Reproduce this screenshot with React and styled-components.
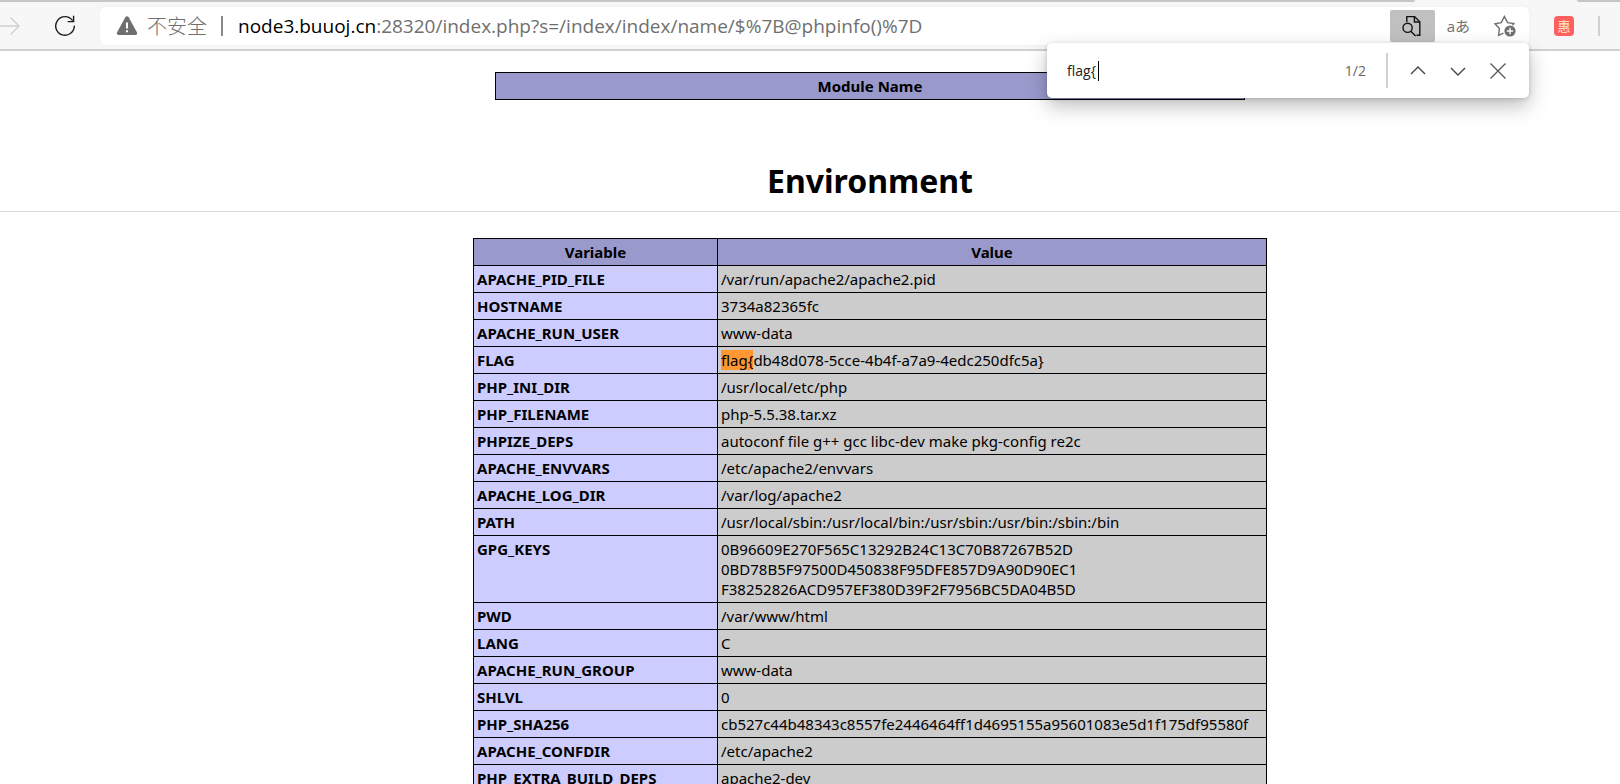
import React, { useState } from "react";
import styled, { createGlobalStyle } from "styled-components";

const colors = {
  chrome: "#f7f7f7",
  chromeEdge: "#f0f0f0",
  strip: "#c6c6c6",
  line: "#d0d0d0",
  muted: "#6f6f6f",
  tableHead: "#9999cc",
  tableName: "#ccccff",
  tableValue: "#cccccc",
  match: "#ff9632",
};

const fonts = {
  chrome: '"Open Sans", "Noto Sans CJK SC", sans-serif',
  page: '"Noto Sans", "Noto Sans CJK SC", sans-serif',
};

const environment = [
  { name: "APACHE_PID_FILE", value: "/var/run/apache2/apache2.pid" },
  { name: "HOSTNAME", value: "3734a82365fc" },
  { name: "APACHE_RUN_USER", value: "www-data" },
  { name: "FLAG", value: "flag{db48d078-5cce-4b4f-a7a9-4edc250dfc5a}" },
  { name: "PHP_INI_DIR", value: "/usr/local/etc/php" },
  { name: "PHP_FILENAME", value: "php-5.5.38.tar.xz" },
  { name: "PHPIZE_DEPS", value: "autoconf file g++ gcc libc-dev make pkg-config re2c" },
  { name: "APACHE_ENVVARS", value: "/etc/apache2/envvars" },
  { name: "APACHE_LOG_DIR", value: "/var/log/apache2" },
  { name: "PATH", value: "/usr/local/sbin:/usr/local/bin:/usr/sbin:/usr/bin:/sbin:/bin" },
  {
    name: "GPG_KEYS",
    value:
      "0B96609E270F565C13292B24C13C70B87267B52D\n0BD78B5F97500D450838F95DFE857D9A90D90EC1\nF38252826ACD957EF380D39F2F7956BC5DA04B5D",
  },
  { name: "PWD", value: "/var/www/html" },
  { name: "LANG", value: "C" },
  { name: "APACHE_RUN_GROUP", value: "www-data" },
  { name: "SHLVL", value: "0" },
  { name: "PHP_SHA256", value: "cb527c44b48343c8557fe2446464ff1d4695155a95601083e5d1f175df95580f" },
  { name: "APACHE_CONFDIR", value: "/etc/apache2" },
  { name: "PHP_EXTRA_BUILD_DEPS", value: "apache2-dev" },
];

/* Value
 *
 * Cell text, with the searched term marked where it occurs.
 */

const Value = ({ text, query }) => {
  const start = query ? text.indexOf(query) : -1;
  if (start < 0) return text;
  return (
    <>
      {text.slice(0, start)}
      <StyledMark>{query}</StyledMark>
      {text.slice(start + query.length)}
    </>
  );
};

/* Toolbar
 *
 * Navigation buttons, address bar and extensions.
 */

const Toolbar = () => (
  <StyledToolbar>
    <StyledNav>
      <StyledIconButton $width={20} aria-label="Forward" disabled>
        <svg width="20" height="20" viewBox="0 0 20 20" fill="none" stroke="#cfcfcf" strokeWidth="1.3">
          <path d="M0 10H19M10.5 1.5L19 10L10.5 18.5" />
        </svg>
      </StyledIconButton>
      <StyledIconButton $width={22} aria-label="Refresh">
        <svg width="22" height="22" viewBox="0 0 22 22" fill="none" stroke="#1b1b1b" strokeWidth="1.4">
          <path d="M18.6 5.6A9.3 9.3 0 1 0 20.3 10.6" />
          <path d="M19.6 0.8V6.6H13.6" />
        </svg>
      </StyledIconButton>
    </StyledNav>
    <StyledAddressBar>
      <StyledSecurity>
        <svg width="22" height="20" viewBox="0 0 22 20">
          <path d="M9.3 1.2Q11 -0.8 12.7 1.2L21 16.6Q21.6 19 19.4 19H2.6Q0.4 19 1 16.6Z" fill={colors.muted} />
          <path d="M11 6.5V12.5M11 14.2V16.2" stroke="#fff" strokeWidth="2" />
        </svg>
        不安全
      </StyledSecurity>
      <StyledDivider $height={20} $color="#8a8a8a" />
      <StyledUrl>
        <b>node3.buuoj.cn</b>:28320/index.php?s=/index/index/name/$%7B@phpinfo()%7D
      </StyledUrl>
      <StyledActions>
        <StyledIconButton $width={45} $active aria-label="Find on page">
          <svg width="22" height="22" viewBox="0 0 22 22" fill="none" stroke="#111" strokeWidth="1.4">
            <path d="M5.8 7V1.6H13.6L18.8 6.8V20.2H15.5" />
            <path d="M13.4 1.6V7H18.8" />
            <circle cx="6.6" cy="12.8" r="4.6" />
            <path d="M9.8 16.2L14.6 21" />
          </svg>
        </StyledIconButton>
        <StyledTranslate aria-label="Translate">aあ</StyledTranslate>
        <StyledIconButton $width={22} aria-label="Add to favorites">
          <svg width="22" height="22" viewBox="0 0 22 22" fill="none" stroke={colors.muted} strokeWidth="1.4">
            <path d="M9.5 18.2L4.6 20.4L5.4 13.6L1 8.8L7.2 7.6L10.4 1.6L13.6 7.6L19.8 8.6L18.4 10.2" />
            <circle cx="16" cy="16" r="5.6" fill={colors.muted} stroke="none" />
            <path d="M16 12.8V19.2M12.8 16H19.2" stroke="#fff" />
          </svg>
        </StyledIconButton>
      </StyledActions>
    </StyledAddressBar>
    <StyledExtensions>
      <StyledExtension>惠</StyledExtension>
      <StyledDivider $height={20} $color={colors.line} />
    </StyledExtensions>
  </StyledToolbar>
);

/* FindBar
 *
 * Search box that floats over the page.
 */

const FindBar = ({ query, onChange }) => (
  <StyledFindBar>
    <StyledField>
      <StyledInput
        aria-label="Find on page"
        value={query}
        onChange={(event) => onChange(event.target.value)}
      />
      <StyledCaret />
    </StyledField>
    <StyledCount>1/2</StyledCount>
    <StyledDivider $height={35} $color={colors.line} />
    <StyledFindButtons>
      <StyledIconButton $width={16} aria-label="Previous result">
        <svg width="16" height="16" viewBox="0 0 16 16" fill="none" stroke="#444" strokeWidth="1.4">
          <path d="M1 11L8 4L15 11" />
        </svg>
      </StyledIconButton>
      <StyledIconButton $width={16} aria-label="Next result">
        <svg width="16" height="16" viewBox="0 0 16 16" fill="none" stroke="#444" strokeWidth="1.4">
          <path d="M1 5L8 12L15 5" />
        </svg>
      </StyledIconButton>
      <StyledIconButton $width={16} aria-label="Close">
        <svg width="16" height="16" viewBox="0 0 16 16" fill="none" stroke="#555" strokeWidth="1.3">
          <path d="M0.5 0.5L15.5 15.5M15.5 0.5L0.5 15.5" />
        </svg>
      </StyledIconButton>
    </StyledFindButtons>
  </StyledFindBar>
);

const App = () => {
  const [query, setQuery] = useState("flag{");

  return (
    <StyledWindow>
      <GlobalStyle />
      <StyledHeader>
        <StyledTabStrip>
          <StyledTabEdge $grow $side="right" />
          <StyledTabEdge $side="left" />
        </StyledTabStrip>
        <Toolbar />
        <FindBar query={query} onChange={setQuery} />
      </StyledHeader>
      <StyledPage>
        <StyledTable $width={750}>
          <thead>
            <tr>
              <StyledHeadCell>Module Name</StyledHeadCell>
            </tr>
          </thead>
        </StyledTable>
        <StyledHeading>Environment</StyledHeading>
        <StyledTable $width={794}>
          <thead>
            <tr>
              <StyledHeadCell $width={244}>Variable</StyledHeadCell>
              <StyledHeadCell>Value</StyledHeadCell>
            </tr>
          </thead>
          <tbody>
            {environment.map(({ name, value }) => (
              <tr key={name}>
                <StyledNameCell scope="row">{name}</StyledNameCell>
                <StyledValueCell>
                  <Value text={value} query={query} />
                </StyledValueCell>
              </tr>
            ))}
          </tbody>
        </StyledTable>
      </StyledPage>
    </StyledWindow>
  );
};

const GlobalStyle = createGlobalStyle`
  * {
    box-sizing: border-box;
  }

  body {
    margin: 0;
    background: #fff;
    color: #000;
    font-family: ${fonts.page};
    font-size: 15px;
    line-height: 20px;
  }

  button, input {
    margin: 0;
    padding: 0;
    border: 0;
    background: none;
    color: inherit;
    font: inherit;
  }
`;

const StyledWindow = styled.div`
  display: flex;
  flex-direction: column;
  height: 100vh;
  overflow: hidden;
`;

const StyledHeader = styled.header`
  position: relative;
  z-index: 1;
  flex: none;
  background: ${colors.chrome};
  border-bottom: 2px solid ${colors.line};
  font-family: ${fonts.chrome};
`;

const StyledTabStrip = styled.div`
  display: flex;
  gap: 162px;
  height: 2px;
`;

const StyledTabEdge = styled.div`
  flex: ${({ $grow }) => ($grow ? "1" : "0 0 43px")};
  background: ${colors.strip};
  border-bottom-${({ $side }) => $side}-radius: 4px;
`;

const StyledToolbar = styled.div`
  display: flex;
  align-items: center;
  height: 47px;
`;

const StyledNav = styled.nav`
  display: flex;
  gap: 34px;
  width: 100px;
`;

const StyledIconButton = styled.button`
  display: flex;
  align-items: center;
  justify-content: center;
  width: ${({ $width }) => $width}px;
  height: 32px;
  border-radius: 2px;
  background: ${({ $active }) => ($active ? "#c0c0c0" : "none")};
`;

const StyledAddressBar = styled.div`
  display: flex;
  flex: 1;
  align-items: center;
  height: 38px;
  padding: 0 13px 0 16px;
  border-radius: 6px;
  background: #fff;
  box-shadow: 0 0 4px ${colors.chromeEdge};
  font-size: 19px;
  line-height: 26px;
`;

const StyledSecurity = styled.div`
  display: flex;
  align-items: center;
  gap: 9px;
  margin-right: 14px;
  color: ${colors.muted};
  font-family: "Noto Sans CJK SC", sans-serif;
  font-size: 20px;
  font-weight: 300;
`;

const StyledDivider = styled.span`
  flex: none;
  width: 2px;
  height: ${({ $height }) => $height}px;
  background: ${({ $color }) => $color};
`;

const StyledUrl = styled.div`
  flex: 1;
  margin-left: 15px;
  color: ${colors.muted};
  white-space: nowrap;

  b {
    color: #000;
    font-weight: 400;
  }
`;

const StyledActions = styled.div`
  display: flex;
  align-items: center;
`;

const StyledTranslate = styled.button`
  margin: 0 24px 0 12px;
  color: ${colors.muted};
  font-family: "Open Sans", "Noto Sans CJK JP", sans-serif;
  font-size: 15px;
  line-height: 20px;
`;

const StyledExtensions = styled.div`
  display: flex;
  align-items: center;
  justify-content: space-between;
  width: 91px;
  padding: 0 20px 0 25px;
`;

const StyledExtension = styled.button`
  width: 20px;
  height: 20px;
  border-radius: 4px;
  background: #ff5f5f;
  color: #ffe9c4;
  font-family: "Noto Sans CJK SC", sans-serif;
  font-size: 13px;
  line-height: 20px;
`;

const StyledFindBar = styled.div`
  position: absolute;
  top: 43px;
  right: 91px;
  display: flex;
  align-items: center;
  width: 482px;
  height: 55px;
  padding: 0 23px 0 20px;
  border-radius: 5px;
  background: #fff;
  box-shadow: 0 8px 20px rgba(0, 0, 0, 0.26), 0 1px 4px rgba(0, 0, 0, 0.16);
`;

const StyledField = styled.div`
  display: flex;
  flex: 1;
  align-items: center;
`;

const StyledInput = styled.input`
  width: 31px;
  field-sizing: content;
  outline: none;
  caret-color: transparent;
  color: #222;
  font-size: 14px;
`;

const StyledCaret = styled.span`
  width: 1px;
  height: 20px;
  background: #000;
`;

const StyledCount = styled.span`
  margin-right: 20px;
  color: #666;
  font-size: 14px;
`;

const StyledFindButtons = styled.div`
  display: flex;
  gap: 24px;
  margin-left: 22px;
`;

/* The left padding shifts the centred content; the heading rule still spans the window. */
const StyledPage = styled.main`
  flex: 1;
  min-height: 0;
  padding: 21px 0 0 120px;
`;

const StyledTable = styled.table`
  width: ${({ $width }) => $width}px;
  margin: 0 auto;
  border-collapse: collapse;
`;

const StyledHeadCell = styled.th`
  width: ${({ $width }) => ($width ? `${$width}px` : "auto")};
  padding: 3px;
  border: 1px solid #000;
  background: ${colors.tableHead};
  text-align: center;
`;

const StyledNameCell = styled.th`
  padding: 3px;
  border: 1px solid #000;
  background: ${colors.tableName};
  text-align: left;
  vertical-align: top;
`;

const StyledValueCell = styled.td`
  padding: 3px;
  border: 1px solid #000;
  background: ${colors.tableValue};
  vertical-align: top;
  white-space: pre-line;
`;

const StyledMark = styled.mark`
  background: ${colors.match};
  color: inherit;
`;

const StyledHeading = styled.h1`
  margin: 58px 0 26px -120px;
  padding: 0 0 7px 120px;
  border-bottom: 1px solid #dadada;
  font-size: 32px;
  line-height: 46px;
  text-align: center;
`;

export default App;
